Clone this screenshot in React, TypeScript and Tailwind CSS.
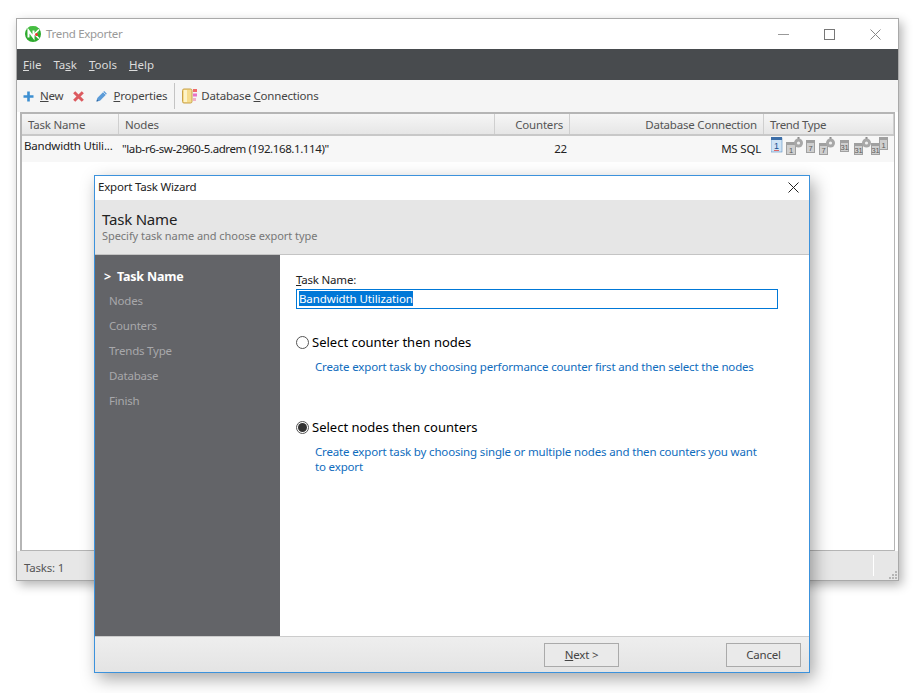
const font = "font-['Noto_Sans','Open_Sans',sans-serif]";

const Logo = () => (
  <svg width="16" height="16" viewBox="0 0 16 16">
    <circle cx="8" cy="8" r="8" fill="#2eaa2e" />
    <circle cx="8" cy="5.5" r="6" fill="#55c94f" opacity="0.6" />
    <path d="M3.5 11.5V4.5L8.5 11.5V4.5" fill="none" stroke="#fff" strokeWidth="2" />
    <path d="M14 3.5L9.5 8l4.5 4.5" fill="none" stroke="#fff" strokeWidth="1.6" />
    <circle cx="11.5" cy="8.5" r="1.5" fill="#e33" />
  </svg>
);

const PlusIcon = () => (
  <svg width="11" height="11" viewBox="0 0 11 11">
    <path d="M5.5 0.5v10M0.5 5.5h10" stroke="#3d8fd1" strokeWidth="2.6" />
  </svg>
);

const DeleteIcon = () => (
  <svg width="11" height="11" viewBox="0 0 11 11">
    <path d="M1.2 1.2l8.6 8.6M9.8 1.2l-8.6 8.6" stroke="#dc5a5f" strokeWidth="3" />
  </svg>
);

const PencilIcon = () => (
  <svg width="12" height="12" viewBox="0 0 12 12">
    <path d="M0.5 11.5l0.8-3.5L8.2 1.1l2.7 2.7L4 10.7z" fill="#5b9bd8" />
    <path d="M7.2 2.1l2.7 2.7" stroke="#fff" strokeWidth="0.7" />
    <path d="M0.5 11.5l0.5-2 1.5 1.5z" fill="#2d5f96" />
  </svg>
);

const DbIcon = () => (
  <svg width="16" height="16" viewBox="0 0 16 16">
    <rect x="0.5" y="1" width="9.5" height="14" rx="1.5" fill="#f6dc8c" stroke="#c9a24a" />
    <rect x="2" y="2" width="3" height="12" fill="#fdf3c8" />
    <rect x="11" y="1" width="4" height="3" fill="#ef6a6a" />
    <rect x="11" y="5.5" width="4" height="3" fill="#e772c8" />
    <rect x="11" y="10" width="3" height="3" fill="#f0b0c8" />
  </svg>
);

// small calendar sheet used in the trend type column
const Calendar = ({ label, x, y, w = 9, h = 12 }: { label: string; x: number; y: number; w?: number; h?: number }) => (
  <g transform={`translate(${x} ${y})`}>
    <rect x="0" y="0" width={w} height={h} fill="#a0a0a0" />
    <rect x="1" y="3" width={w - 2} height={h - 4} fill="#cfcfcf" />
    <text x={w / 2} y={h - 2} fontSize="7.5" textAnchor="middle" fill="#5c5c5c" fontFamily="Liberation Sans">
      {label}
    </text>
  </g>
);

const Stopwatch = ({ x }: { x: number }) => (
  <g transform={`translate(${x} 0)`}>
    <rect x="3.5" y="0" width="2" height="2" fill="#8a8a8a" />
    <circle cx="4.5" cy="6" r="4.5" fill="#a8a8a8" />
    <circle cx="4.5" cy="6" r="1.6" fill="#f0f0f0" />
  </g>
);

const TrendIcons = () => (
  <svg width="118" height="19" viewBox="0 0 118 19">
    <rect x="0" y="1" width="11" height="14" fill="#cfe3f5" stroke="#5a8fc4" strokeWidth="0.6" />
    <rect x="0" y="0" width="11" height="3" fill="#3c6ea8" />
    <text x="5.5" y="11.5" fontSize="9" textAnchor="middle" fill="#1b4f8f" fontFamily="Liberation Sans">1</text>
    <rect x="3" y="13" width="5" height="1" fill="#d66" />
    <Calendar label="1" x={15} y={5} w={10} h={13} />
    <Stopwatch x={23} />
    <Calendar label="7" x={35} y={3} h={13} />
    <Calendar label="7" x={48} y={6} />
    <Stopwatch x={55} />
    <Calendar label="31" x={69} y={3} />
    <Calendar label="31" x={83} y={6} />
    <Stopwatch x={91} />
    <Calendar label="31" x={100} y={6} />
    <Calendar label="1" x={108} y={0} h={13} />
  </svg>
);

const SizeGrip = () => (
  <svg width="9" height="9" viewBox="0 0 9 9" fill="#b5b5b5">
    <rect x="7" y="1" width="2" height="2" />
    <rect x="4" y="4" width="2" height="2" />
    <rect x="7" y="4" width="2" height="2" />
    <rect x="1" y="7" width="2" height="2" />
    <rect x="4" y="7" width="2" height="2" />
    <rect x="7" y="7" width="2" height="2" />
  </svg>
);

const HeaderCell = ({ title, className }: { title: string; className: string }) => (
  <div className={`flex items-center pt-[2px] px-[6px] border-r border-[#cfcfcf] text-[#555] ${className}`}>{title}</div>
);

const Radio = ({ checked }: { checked?: boolean }) => (
  <span className="flex w-[13px] h-[13px] shrink-0 -mt-[1px] items-center justify-center rounded-full border border-[#555] bg-white">
    {checked && <span className="w-[9px] h-[9px] rounded-full bg-[#333]" />}
  </span>
);

const Option = ({ title, checked, children }: { title: string; checked?: boolean; children: string }) => (
  <div>
    <div className="flex items-center gap-[3px] h-[18px] text-[13px] tracking-normal text-black">
      <Radio checked={checked} />
      <span>{title}</span>
    </div>
    <p className="mt-[7px] ml-[19px] w-[450px] tracking-[-0.16px] text-[#0f6cbd] leading-[15px]">{children}</p>
  </div>
);

const steps = ["Nodes", "Counters", "Trends Type", "Database", "Finish"];

export default function App() {
  return (
    <div className={`relative w-[913px] h-[693px] bg-white overflow-hidden text-[11.5px] tracking-[-0.2px] ${font}`}>
      {/* Main window */}
      <div className="absolute left-[16px] top-[18px] w-[883px] h-[563px] flex flex-col border border-[#a9a9a9] bg-white shadow-[3px_4px_10px_rgba(0,0,0,0.3)]">
        <div className="flex items-center h-[30px] shrink-0 pl-[8px] gap-[5px] text-[#999]">
          <Logo />
          <span className="tracking-[-0.3px]">Trend Exporter</span>
          <div className="ml-auto flex items-center gap-[35px] pr-[17px]">
            <svg width="11" height="11" viewBox="0 0 11 11"><path d="M0 5.5h11" stroke="#999" /></svg>
            <svg width="11" height="11" viewBox="0 0 11 11"><rect x="0.5" y="0.5" width="10" height="10" fill="none" stroke="#777" /></svg>
            <svg width="11" height="11" viewBox="0 0 11 11"><path d="M0.5 0.5l10 10M10.5 0.5l-10 10" stroke="#888" /></svg>
          </div>
        </div>

        <div className="flex items-center h-[31px] shrink-0 bg-[#484b4e] pl-[6px] gap-[12px] tracking-normal text-[#dcdcdc]">
          <span><u>F</u>ile</span>
          <span>Ta<u>s</u>k</span>
          <span><u>T</u>ools</span>
          <span><u>H</u>elp</span>
        </div>

        <div className="flex items-center h-[32px] shrink-0 bg-[#f5f5f5] pl-[6px] text-[#444]">
          <PlusIcon />
          <span className="ml-[6px]"><u>N</u>ew</span>
          <span className="ml-[10px]"><DeleteIcon /></span>
          <span className="ml-[12px]"><PencilIcon /></span>
          <span className="ml-[5px]"><u>P</u>roperties</span>
          <div className="ml-[7px] w-px h-[26px] bg-[#c4c4c4]" />
          <span className="ml-[7px]"><DbIcon /></span>
          <span className="ml-[3px]">Database <u>C</u>onnections</span>
        </div>

        <div className="flex-1 mx-[3px] border-[2px] border-[#b5b5b5] border-b border-r bg-white min-h-0">
          <div className="flex h-[22px] bg-gradient-to-b from-[#f6f6f6] to-[#e6e6e6] border-b-[2px] border-[#c8c8c8]">
            <HeaderCell title="Task Name" className="w-[97px]" />
            <HeaderCell title="Nodes" className="w-[376px]" />
            <HeaderCell title="Counters" className="w-[75px] justify-end" />
            <HeaderCell title="Database Connection" className="w-[194px] justify-end" />
            <HeaderCell title="Trend Type" className="flex-1 tracking-[-0.35px]" />
          </div>
          <div className="flex h-[26px] bg-[#f7f7f7] text-[#222]">
            <div className="w-[97px] pl-[2px] pt-[1px] whitespace-nowrap">Bandwidth Utili...</div>
            <div className="w-[376px] pl-[3px] pt-[4px] tracking-[-0.4px]">"lab-r6-sw-2960-5.adrem (192.168.1.114)"</div>
            <div className="w-[75px] pt-[4px] pr-[3px] text-right">22</div>
            <div className="w-[194px] pt-[4px] pr-[3px] text-right">MS SQL</div>
            <div className="pl-[7px] pt-[1px]"><TrendIcons /></div>
          </div>
        </div>

        <div className="flex items-center h-[29px] shrink-0 bg-[#e7e7e7] pl-[7px] pt-[5px] text-[#555]">
          <span>Tasks: 1</span>
          <div className="ml-auto -mt-[5px] w-px h-[21px] bg-white mr-[14px]" />
          <div className="self-end pb-[1px] pr-[1px]"><SizeGrip /></div>
        </div>
      </div>

      {/* Wizard dialog */}
      <div className="absolute left-[94px] top-[175px] w-[716px] h-[498px] flex flex-col border border-[#3c92dc] bg-white shadow-[4px_6px_16px_rgba(0,0,0,0.35)]">
        <div className="flex items-center justify-between h-[24px] shrink-0 pl-[3px] pr-[10px] pb-[2px] text-[#222]">
          <span>Export Task Wizard</span>
          <svg width="11" height="11" viewBox="0 0 11 11"><path d="M0.5 0.5l10 10M10.5 0.5l-10 10" stroke="#222" /></svg>
        </div>

        <div className="h-[55px] shrink-0 bg-[#e6e6e6] border-b border-[#c4c4c4] pl-[7px] pt-[9px]">
          <div className="text-[15px] leading-[20px] text-[#222]">Task Name</div>
          <div className="text-[11px] leading-[13px] tracking-[-0.05px] text-[#777]">Specify task name and choose export type</div>
        </div>

        <div className="flex flex-1 min-h-0">
          <div className="w-[185px] shrink-0 bg-[#636468] pt-[12px] text-[#a8a8ab]">
            <div className="flex h-[20px] items-center pl-[9px] gap-[6px] text-[12.5px] font-bold text-white">
              <span>&gt;</span>
              <span>Task Name</span>
            </div>
            <div className="mt-[4px] flex flex-col gap-[5px] pl-[14px]">
              {steps.map((step) => (
                <div key={step} className="h-[20px] flex items-center">{step}</div>
              ))}
            </div>
          </div>

          <div className="flex-1 pl-[16px] pt-[17px]">
            <div className="leading-[16px] text-[#222]"><u>T</u>ask Name:</div>
            <div className="mt-[1px] w-[482px] h-[20px] flex items-center border border-[#0078d7] pl-[2px] pb-[2px]">
              <span className="bg-[#0078d7] text-white leading-[15px] tracking-[-0.1px]">Bandwidth Utilization</span>
            </div>
            <div className="mt-[25px]">
              <Option title="Select counter then nodes">
                Create export task by choosing performance counter first and then select the nodes
              </Option>
            </div>
            <div className="mt-[45px]">
              <Option title="Select nodes then counters" checked>
                Create export task by choosing single or multiple nodes and then counters you want to export
              </Option>
            </div>
          </div>
        </div>

        <div className="flex items-center justify-end gap-[107px] h-[36px] shrink-0 pr-[8px] border-t border-[#cccccc] bg-gradient-to-b from-[#eeeeee] to-[#e4e4e4] text-[#444]">
          <button className="w-[75px] h-[24px] border border-[#aaa] bg-[#eaeaea]"><u>N</u>ext &gt;</button>
          <button className="w-[75px] h-[24px] border border-[#aaa] bg-[#eaeaea]">Cancel</button>
        </div>
      </div>
    </div>
  );
}
